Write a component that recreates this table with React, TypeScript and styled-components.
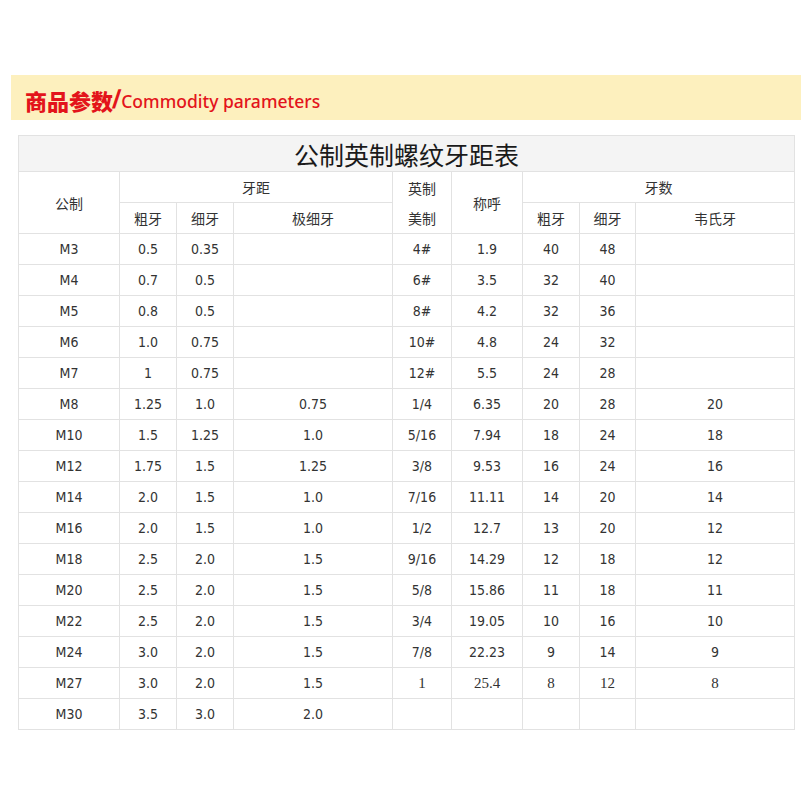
import React from "react";
import styled, { createGlobalStyle } from "styled-components";

const Global = createGlobalStyle`
  html, body { margin: 0; padding: 0; background: #fff; }
  body { font-family: "DejaVu Sans Condensed", "DejaVu Sans", "Noto Sans CJK SC", sans-serif; }
`;

const Page = styled.div`
  display: flex;
  flex-direction: column;
  padding-top: 75px;
  width: 802px;
`;

const Banner = styled.div`
  margin-left: 11px;
  width: 790px;
  height: 45px;
  background: #fdf0be;
  display: flex;
  align-items: center;
  padding: 4px 0 0 14px;
  box-sizing: border-box;
  color: #e3141b;
`;

const BannerCn = styled.span`
  font-family: "Noto Sans CJK SC", sans-serif;
  font-weight: 900;
  font-size: 22px;
`;

const BannerSlash = styled.span`
  font-family: "Liberation Sans", sans-serif;
  font-weight: 700;
  font-size: 26px;
  margin: 0 1px 0 0;
  display: inline-block;
  transform: skewX(-8deg);
`;

const BannerEn = styled.span`
  font-family: "Noto Sans", sans-serif;
  font-size: 17.5px;
  font-weight: 500;
  padding-top: 3px;
`;

const Table = styled.table`
  margin: 15px 0 0 18px;
  width: 776px;
  border-collapse: collapse;
  table-layout: fixed;
  color: #333;
`;

const TitleCell = styled.th`
  height: 35px;
  background: #f4f4f4;
  border: 1px solid #e2e2e2;
  font-family: "Noto Sans CJK SC", serif;
  font-weight: 400;
  font-size: 25px;
  line-height: 34px;
  color: #1a1a1a;
  text-align: center;
  padding: 0;
`;

const HeadCell = styled.th`
  height: 30px;
  border: 1px solid #e2e2e2;
  font-family: "Noto Sans CJK SC", sans-serif;
  font-weight: 400;
  font-size: 14px;
  color: #333;
  text-align: center;
  padding: 0;
  line-height: 30px;
`;

const Cell = styled.td<{ $serif?: boolean }>`
  height: 30px;
  border: 1px solid #e2e2e2;
  text-align: center;
  padding: 0;
  line-height: 30px;
  font-family: ${(p) =>
    p.$serif
      ? `"Liberation Serif", serif`
      : `"DejaVu Sans Condensed", "DejaVu Sans", sans-serif`};
  font-size: ${(p) => (p.$serif ? "15px" : "14px")};
  color: #333;
`;

const widths = [101, 57, 57, 159, 59, 71, 57, 56, 159];

type Row = { v: string[]; serifRight?: boolean };

const rows: Row[] = [
  { v: ["M3", "0.5", "0.35", "", "4#", "1.9", "40", "48", ""] },
  { v: ["M4", "0.7", "0.5", "", "6#", "3.5", "32", "40", ""] },
  { v: ["M5", "0.8", "0.5", "", "8#", "4.2", "32", "36", ""] },
  { v: ["M6", "1.0", "0.75", "", "10#", "4.8", "24", "32", ""] },
  { v: ["M7", "1", "0.75", "", "12#", "5.5", "24", "28", ""] },
  { v: ["M8", "1.25", "1.0", "0.75", "1/4", "6.35", "20", "28", "20"] },
  { v: ["M10", "1.5", "1.25", "1.0", "5/16", "7.94", "18", "24", "18"] },
  { v: ["M12", "1.75", "1.5", "1.25", "3/8", "9.53", "16", "24", "16"] },
  { v: ["M14", "2.0", "1.5", "1.0", "7/16", "11.11", "14", "20", "14"] },
  { v: ["M16", "2.0", "1.5", "1.0", "1/2", "12.7", "13", "20", "12"] },
  { v: ["M18", "2.5", "2.0", "1.5", "9/16", "14.29", "12", "18", "12"] },
  { v: ["M20", "2.5", "2.0", "1.5", "5/8", "15.86", "11", "18", "11"] },
  { v: ["M22", "2.5", "2.0", "1.5", "3/4", "19.05", "10", "16", "10"] },
  { v: ["M24", "3.0", "2.0", "1.5", "7/8", "22.23", "9", "14", "9"] },
  { v: ["M27", "3.0", "2.0", "1.5", "1", "25.4", "8", "12", "8"], serifRight: true },
  { v: ["M30", "3.5", "3.0", "2.0", "", "", "", "", ""] },
];

export default function App() {
  return (
    <>
      <Global />
      <Page>
        <Banner>
          <BannerCn>商品参数</BannerCn>
          <BannerSlash>/</BannerSlash>
          <BannerEn>Commodity parameters</BannerEn>
        </Banner>
        <Table>
          <colgroup>
            {widths.map((w, i) => (
              <col key={i} style={{ width: w }} />
            ))}
          </colgroup>
          <thead>
            <tr>
              <TitleCell colSpan={9}>公制英制螺纹牙距表</TitleCell>
            </tr>
            <tr>
              <HeadCell rowSpan={2}>公制</HeadCell>
              <HeadCell colSpan={3}>牙距</HeadCell>
              <HeadCell rowSpan={2}>
                英制
                <br />
                美制
              </HeadCell>
              <HeadCell rowSpan={2}>称呼</HeadCell>
              <HeadCell colSpan={3}>牙数</HeadCell>
            </tr>
            <tr>
              <HeadCell>粗牙</HeadCell>
              <HeadCell>细牙</HeadCell>
              <HeadCell>极细牙</HeadCell>
              <HeadCell>粗牙</HeadCell>
              <HeadCell>细牙</HeadCell>
              <HeadCell>韦氏牙</HeadCell>
            </tr>
          </thead>
          <tbody>
            {rows.map((r, i) => (
              <tr key={i}>
                {r.v.map((c, j) => (
                  <Cell key={j} $serif={r.serifRight && j >= 4}>
                    {c}
                  </Cell>
                ))}
              </tr>
            ))}
          </tbody>
        </Table>
      </Page>
    </>
  );
}
